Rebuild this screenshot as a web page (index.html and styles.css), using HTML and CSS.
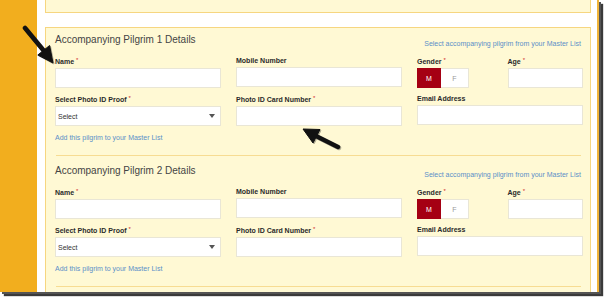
FILE: index.html
```html
<!DOCTYPE html>
<html>
<head>
<meta charset="utf-8">
<link rel="stylesheet" href="styles.css">
</head>
<body>
<div class="frame">
<div class="shot">
  <div class="sidebar"></div>
  <div class="main">
    <div class="panel-top"></div>
    <div class="panel">
      <section class="pilgrim">
        <div class="sec-head">
          <h2 class="sec-title">Accompanying Pilgrim 1 Details</h2>
          <a class="link master">Select accompanying pilgrim from your Master List</a>
        </div>
        <div class="fields">
          <div class="field"><label class="lbl">Name <span class="req">*</span></label><div class="input"></div></div>
          <div class="field"><label class="lbl">Mobile Number</label><div class="input"></div></div>
          <div class="field"><label class="lbl">Gender <span class="req">*</span></label>
            <div class="toggle"><span class="opt on">M</span><span class="opt">F</span></div></div>
          <div class="field"><label class="lbl">Age <span class="req">*</span></label><div class="input"></div></div>
          <div class="field"><label class="lbl">Select Photo ID Proof <span class="req">*</span></label>
            <div class="input select"><span class="sel-text">Select</span><span class="caret"></span></div></div>
          <div class="field"><label class="lbl">Photo ID Card Number <span class="req">*</span></label><div class="input"></div></div>
          <div class="field span2"><label class="lbl">Email Address</label><div class="input"></div></div>
        </div>
        <a class="link add">Add this pilgrim to your Master List</a>
      </section>
      <hr class="divider">
      <section class="pilgrim">
        <div class="sec-head">
          <h2 class="sec-title">Accompanying Pilgrim 2 Details</h2>
          <a class="link master">Select accompanying pilgrim from your Master List</a>
        </div>
        <div class="fields">
          <div class="field"><label class="lbl">Name <span class="req">*</span></label><div class="input"></div></div>
          <div class="field"><label class="lbl">Mobile Number</label><div class="input"></div></div>
          <div class="field"><label class="lbl">Gender <span class="req">*</span></label>
            <div class="toggle"><span class="opt on">M</span><span class="opt">F</span></div></div>
          <div class="field"><label class="lbl">Age <span class="req">*</span></label><div class="input"></div></div>
          <div class="field"><label class="lbl">Select Photo ID Proof <span class="req">*</span></label>
            <div class="input select"><span class="sel-text">Select</span><span class="caret"></span></div></div>
          <div class="field"><label class="lbl">Photo ID Card Number <span class="req">*</span></label><div class="input"></div></div>
          <div class="field span2"><label class="lbl">Email Address</label><div class="input"></div></div>
        </div>
        <a class="link add">Add this pilgrim to your Master List</a>
      </section>
      <hr class="divider">
    </div>
  </div>
  <svg class="arrows" width="599" height="292" viewBox="0 0 599 292">
    <g fill="#111" stroke="#111">
      <line x1="25" y1="28" x2="44" y2="51" stroke-width="4.5" stroke-linecap="round"/>
      <polygon points="53,63 37.8,55 49.6,45.5" stroke-width="1" stroke-linejoin="round"/>
      <line x1="338" y1="147" x2="316" y2="136" stroke-width="4.5" stroke-linecap="round"/>
      <polygon points="303,129 320,129.5 313,143" stroke-width="1" stroke-linejoin="round"/>
    </g>
  </svg>
</div>
</div>
</body>
</html>
```

FILE: styles.css
```css
* { box-sizing: border-box; }
html, body { margin: 0; padding: 0; background: #fff; }
body { font-family: "Liberation Sans", Arial, sans-serif; min-height: 299px; }

.frame { width: 606px; height: 299px; }

.shot {
  position: relative;
  width: 599px;
  height: 292px;
  display: flex;
  overflow: hidden;
  background: #fff;
  border-right: 2px solid #f1b53a;
  box-shadow: 2px 2px 0 0 #555, 4px 4px 1px 0 #3a3a3a;
}

.sidebar { width: 37px; flex: none; background: #f2ae1e; }

.main { flex: 1; padding: 0 6px 0 8px; }

.panel-top {
  height: 13px;
  background: #fff9d4;
  border: 1px solid #f6d680;
  border-top: none;
  margin-bottom: 14px;
}

.panel {
  background: #fff9d4;
  border: 1px solid #f6d680;
  border-bottom: none;
  padding: 0 7px 0 9px;
  height: 300px;
}

.pilgrim { padding-top: 6px; }

.sec-head { display: flex; justify-content: space-between; align-items: flex-end; }
.sec-title {
  margin: 0;
  font-size: 10px;
  line-height: 12px;
  font-weight: normal;
  color: #444;
}
.link { color: #5b8fc8; font-size: 7px; line-height: 9px; text-decoration: none; }
.master { margin-right: 2px; margin-bottom: -2px; }

.fields {
  display: grid;
  grid-template-columns: 166px 166px 75.5px 75.5px;
  column-gap: 15px;
  row-gap: 6px;
  margin-top: 10px;
}
.field { display: flex; flex-direction: column; }
.span2 { grid-column: span 2; }
.lbl {
  font-size: 7px;
  line-height: 9px;
  font-weight: bold;
  color: #2a2a2a;
  margin-bottom: 2px;
  white-space: nowrap;
}
.req { color: #d0262a; font-weight: normal; font-size: 6px; vertical-align: 2px; }

.input {
  height: 20px;
  background: #fff;
  border: 1px solid #e9e6d6;
}
.select { display: flex; align-items: center; justify-content: space-between; padding: 0 5px 0 2px; }
.sel-text { font-size: 7px; color: #333; }
.caret {
  width: 0; height: 0;
  border-left: 3.5px solid transparent;
  border-right: 3.5px solid transparent;
  border-top: 4px solid #555;
}

.toggle { display: flex; height: 20px; width: 52px; }
.opt {
  flex: 28px 0 0;
  display: flex; align-items: center; justify-content: center;
  font-size: 7px; color: #999;
  background: #fff;
  border: 1px solid #e9e6d6;
  border-left: none;
}
.opt.on { flex-basis: 24px; background: #a50013; color: #fff; border: 1px solid #a50013; }

.add { display: block; margin-top: 7px; }

.divider {
  margin: 13px 2px 3px 1px;
  border: none;
  height: 1px;
  background: #f7dc92;
}

.arrows { position: absolute; left: 0; top: 0; pointer-events: none; filter: drop-shadow(1px 1px 0.6px rgba(0,0,0,0.3)); }
```
